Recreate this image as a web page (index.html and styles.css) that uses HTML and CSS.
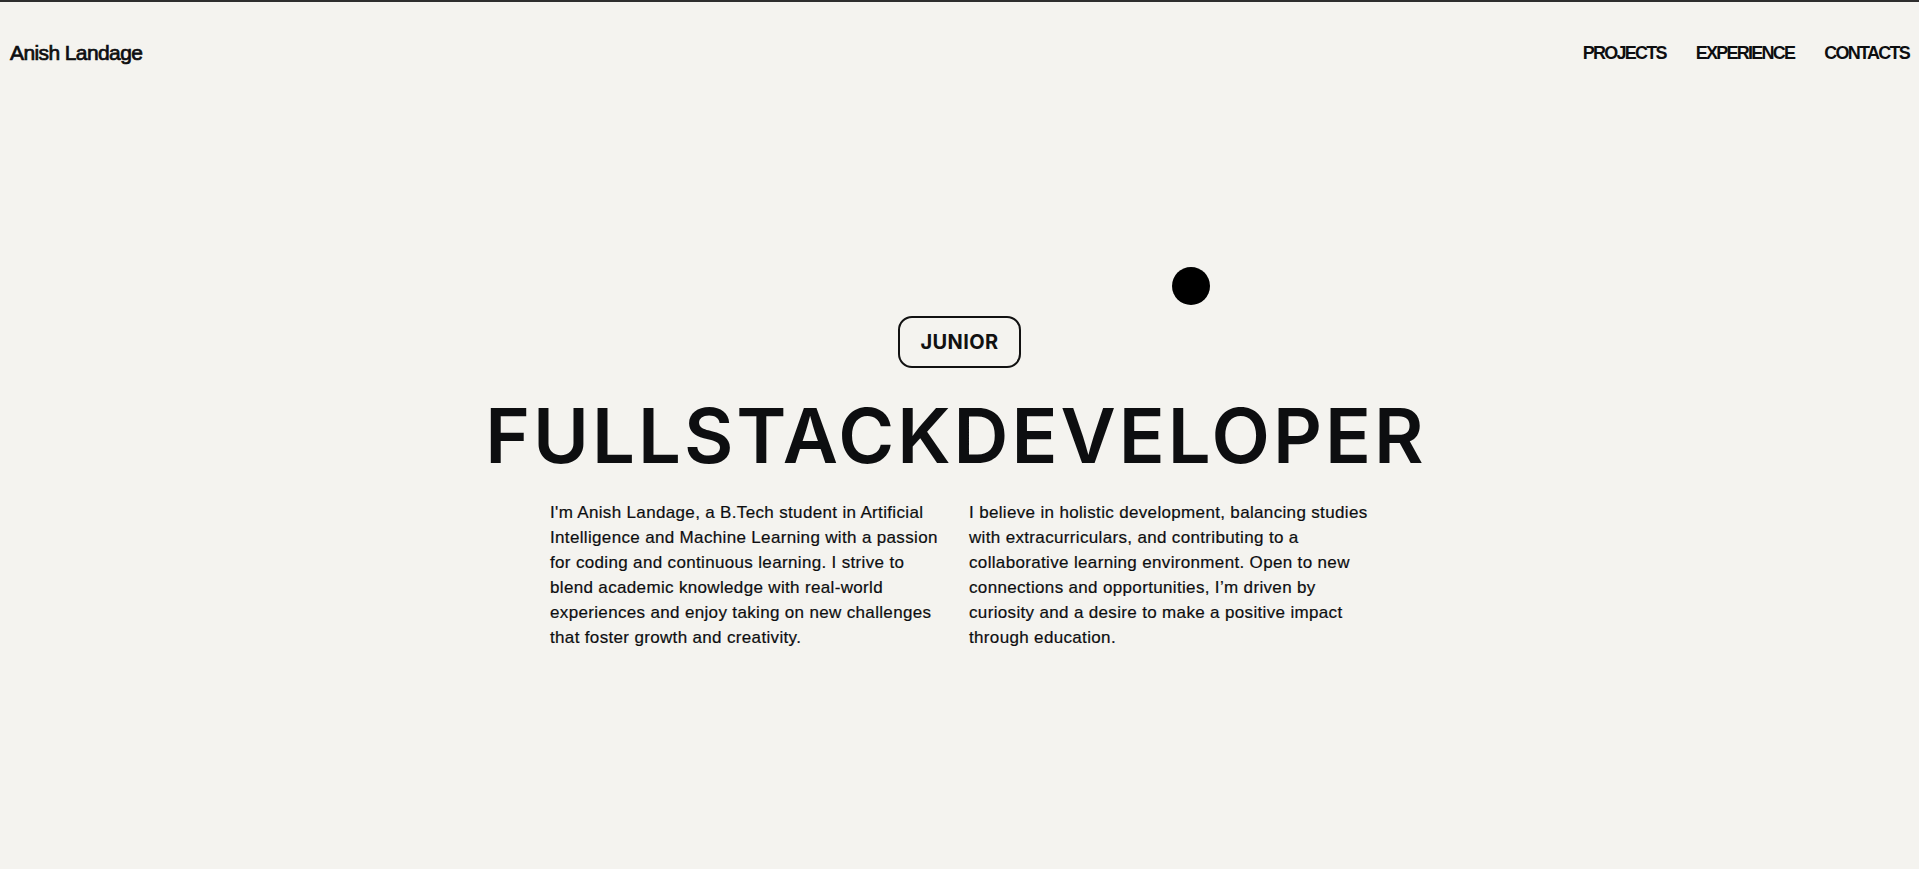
FILE: index.html
```html
<!DOCTYPE html>
<html lang="en">
<head>
<meta charset="utf-8">
<title>Anish Landage</title>
<link rel="stylesheet" href="styles.css">
</head>
<body>
<header class="header">
  <a class="logo" href="#">Anish Landage</a>
  <nav class="nav">
    <a href="#">PROJECTS</a>
    <a href="#">EXPERIENCE</a>
    <a href="#">CONTACTS</a>
  </nav>
</header>
<main class="hero">
  <div class="badge">JUNIOR</div>
  <h1 class="title"><span>FULL</span><span>STACK</span><span>DEVELOPER</span></h1>
  <div class="about">
    <p>I'm Anish Landage, a B.Tech student in Artificial Intelligence and Machine Learning with a passion for coding and continuous learning. I strive to blend academic knowledge with real-world experiences and enjoy taking on new challenges that foster growth and creativity.</p>
    <p>I believe in holistic development, balancing studies with extracurriculars, and contributing to a collaborative learning environment. Open to new connections and opportunities, I’m driven by curiosity and a desire to make a positive impact through education.</p>
  </div>
</main>
<div class="cursor"></div>
</body>
</html>
```

FILE: styles.css
```css
* { box-sizing: border-box; }
html, body { margin: 0; padding: 0; }
body {
  background: #f4f3ef;
  color: #0d0e10;
  border-top: 2px solid #2e2e2e;
  min-height: 869px;
  font-family: "Liberation Sans", Arial, sans-serif;
}
.header {
  display: flex;
  justify-content: space-between;
  align-items: center;
  padding: 39px 10px 0 10px;
}
.logo {
  font-size: 21px;
  letter-spacing: -0.6px;
  color: #0d0e10;
  text-decoration: none;
  -webkit-text-stroke: 0.7px #0d0e10;
}
.nav {
  display: flex;
  gap: 30px;
}
.nav a {
  font-size: 18px;
  font-weight: 700;
  letter-spacing: -1.75px;
  color: #0d0e10;
  text-decoration: none;
}
.hero {
  display: flex;
  flex-direction: column;
  align-items: center;
  padding-top: 251px;
}
.badge {
  border: 2px solid #111;
  border-radius: 14px;
  padding: 12px 20px;
  font-family: Inter, "Liberation Sans", sans-serif;
  font-weight: 700;
  font-size: 20px;
  line-height: 24px;
  letter-spacing: 0.02em;
  color: #111;
}
.title {
  margin: 29px 0 0 0;
  display: flex;
  gap: 0;
  font-family: Inter, "Liberation Sans", sans-serif;
  font-weight: 600;
  font-size: 76px;
  line-height: 1;
  letter-spacing: 3px;
  padding-right: 7px;
  color: #0d0e10;
}
.about {
  margin-top: 27px;
  display: grid;
  grid-template-columns: 400px 400px;
  column-gap: 19px;
}
.about p {
  margin: 0;
  font-size: 17px;
  line-height: 25px;
  letter-spacing: 0.02em;
  -webkit-text-stroke: 0.2px #0d0e10;
}
.cursor {
  position: absolute;
  left: 1172px;
  top: 267px;
  width: 38px;
  height: 38px;
  border-radius: 50%;
  background: #000;
}
```
